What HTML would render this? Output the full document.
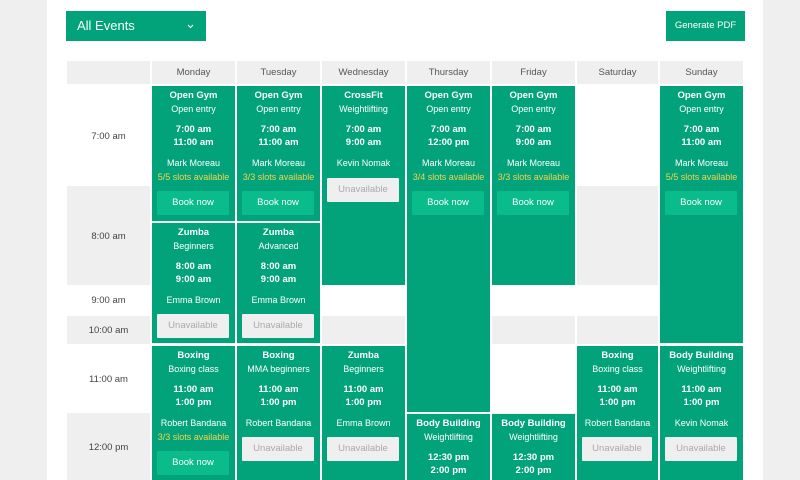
<!DOCTYPE html>
<html><head><meta charset="utf-8"><style>
*{box-sizing:border-box;margin:0;padding:0}
body{width:800px;height:480px;overflow:hidden;background:#efefef;font-family:"Liberation Sans",sans-serif;position:relative}
.panel{position:absolute;left:47px;top:0;width:716px;height:480px;background:#fff}
.a{position:absolute}
.g{background:#efefef}
.hd{position:absolute;top:61px;height:23px;background:#efefef;color:#555;font-size:9.5px;text-align:center;line-height:23px}
.t{position:absolute;left:67px;width:83px;font-size:9.5px;color:#444;text-align:center}
.ev{position:absolute;background:#02a37a;color:#fff;text-align:center;font-size:9px;line-height:12.5px;padding-top:4px}
.ev b{display:block;font-size:9.5px}
.ev .sp{height:9px}
.ev .n{margin-top:8px}
.ev .s{color:#f2d54a;margin-top:1px}
.bt{position:absolute;left:5px;right:6px;height:24px;line-height:24px;font-size:9.5px;border-radius:1px}
.bk{background:#0abb8b;color:#fff}
.un{background:#efefef;color:#aaa}
</style></head><body>
<div class="panel"></div>
<div class="a" style="left:66px;top:11px;width:140px;height:30px;background:#02a37a;color:#fff;font-size:13px;line-height:30px;padding-left:11px">All Events<svg style="position:absolute;left:186px;left:121px;top:13px" width="7" height="5" viewBox="0 0 7 5"><path d="M1 1L3.5 3.5L6 1" stroke="#fff" stroke-width="1.2" fill="none"/></svg></div>
<div class="a" style="left:666px;top:11px;width:79px;height:30px;background:#02a37a;color:#fff;font-size:9.5px;line-height:30px;text-align:center">Generate PDF</div>

<div class="hd" style="left:67px;width:83px"></div>
<div class="hd" style="left:152px;width:83px">Monday</div>
<div class="hd" style="left:237px;width:83px">Tuesday</div>
<div class="hd" style="left:322px;width:83px">Wednesday</div>
<div class="hd" style="left:407px;width:83px">Thursday</div>
<div class="hd" style="left:492px;width:83px">Friday</div>
<div class="hd" style="left:577px;width:81px">Saturday</div>
<div class="hd" style="left:660px;width:83px">Sunday</div>

<div class="a g" style="left:67px;top:186px;width:676px;height:99px"></div>
<div class="a g" style="left:67px;top:316px;width:676px;height:28px"></div>
<div class="a g" style="left:67px;top:413px;width:676px;height:67px"></div>
<div class="a" style="left:150px;top:61px;width:2px;height:419px;background:#fff"></div>
<div class="a" style="left:235px;top:61px;width:2px;height:419px;background:#fff"></div>
<div class="a" style="left:320px;top:61px;width:2px;height:419px;background:#fff"></div>
<div class="a" style="left:405px;top:61px;width:2px;height:419px;background:#fff"></div>
<div class="a" style="left:490px;top:61px;width:2px;height:419px;background:#fff"></div>
<div class="a" style="left:575px;top:61px;width:2px;height:419px;background:#fff"></div>
<div class="a" style="left:658px;top:61px;width:2px;height:419px;background:#fff"></div>

<div class="t" style="top:131px">7:00 am</div>
<div class="t" style="top:231px">8:00 am</div>
<div class="t" style="top:295px">9:00 am</div>
<div class="t" style="top:325px">10:00 am</div>
<div class="t" style="top:374px">11:00 am</div>
<div class="t" style="top:442px">12:00 pm</div>

<div class="ev" style="left:152px;top:86px;width:83px;height:135px"><b>Open Gym</b>Open entry<div class="sp"></div><b>7:00 am</b><b>11:00 am</b><div class="n">Mark Moreau</div><div class="s">5/5 slots available</div><div class="bt bk" style="top:105px">Book now</div></div>
<div class="ev" style="left:152px;top:223px;width:83px;height:120px"><b>Zumba</b>Beginners<div class="sp"></div><b>8:00 am</b><b>9:00 am</b><div class="n">Emma Brown</div><div class="bt un" style="top:91px">Unavailable</div></div>
<div class="ev" style="left:152px;top:346px;width:83px;height:134px"><b>Boxing</b>Boxing class<div class="sp"></div><b>11:00 am</b><b>1:00 pm</b><div class="n">Robert Bandana</div><div class="s">3/3 slots available</div><div class="bt bk" style="top:105px">Book now</div></div>
<div class="ev" style="left:237px;top:86px;width:83px;height:135px"><b>Open Gym</b>Open entry<div class="sp"></div><b>7:00 am</b><b>11:00 am</b><div class="n">Mark Moreau</div><div class="s">3/3 slots available</div><div class="bt bk" style="top:105px">Book now</div></div>
<div class="ev" style="left:237px;top:223px;width:83px;height:120px"><b>Zumba</b>Advanced<div class="sp"></div><b>8:00 am</b><b>9:00 am</b><div class="n">Emma Brown</div><div class="bt un" style="top:91px">Unavailable</div></div>
<div class="ev" style="left:237px;top:346px;width:83px;height:134px"><b>Boxing</b>MMA beginners<div class="sp"></div><b>11:00 am</b><b>1:00 pm</b><div class="n">Robert Bandana</div><div class="bt un" style="top:91px">Unavailable</div></div>
<div class="ev" style="left:322px;top:86px;width:83px;height:199px"><b>CrossFit</b>Weightlifting<div class="sp"></div><b>7:00 am</b><b>9:00 am</b><div class="n">Kevin Nomak</div><div class="bt un" style="top:92px">Unavailable</div></div>
<div class="ev" style="left:322px;top:346px;width:83px;height:134px"><b>Zumba</b>Beginners<div class="sp"></div><b>11:00 am</b><b>1:00 pm</b><div class="n">Emma Brown</div><div class="bt un" style="top:91px">Unavailable</div></div>
<div class="ev" style="left:407px;top:86px;width:83px;height:326px"><b>Open Gym</b>Open entry<div class="sp"></div><b>7:00 am</b><b>12:00 pm</b><div class="n">Mark Moreau</div><div class="s">3/4 slots available</div><div class="bt bk" style="top:105px">Book now</div></div>
<div class="ev" style="left:407px;top:414px;width:83px;height:66px"><b>Body Building</b>Weightlifting<div class="sp"></div><b>12:30 pm</b><b>2:00 pm</b></div>
<div class="ev" style="left:492px;top:86px;width:83px;height:199px"><b>Open Gym</b>Open entry<div class="sp"></div><b>7:00 am</b><b>9:00 am</b><div class="n">Mark Moreau</div><div class="s">3/3 slots available</div><div class="bt bk" style="top:105px">Book now</div></div>
<div class="ev" style="left:492px;top:414px;width:83px;height:66px"><b>Body Building</b>Weightlifting<div class="sp"></div><b>12:30 pm</b><b>2:00 pm</b></div>
<div class="ev" style="left:577px;top:346px;width:81px;height:134px"><b>Boxing</b>Boxing class<div class="sp"></div><b>11:00 am</b><b>1:00 pm</b><div class="n">Robert Bandana</div><div class="bt un" style="top:91px">Unavailable</div></div>
<div class="ev" style="left:660px;top:86px;width:83px;height:257px"><b>Open Gym</b>Open entry<div class="sp"></div><b>7:00 am</b><b>11:00 am</b><div class="n">Mark Moreau</div><div class="s">5/5 slots available</div><div class="bt bk" style="top:105px">Book now</div></div>
<div class="ev" style="left:660px;top:346px;width:83px;height:134px"><b>Body Building</b>Weightlifting<div class="sp"></div><b>11:00 am</b><b>1:00 pm</b><div class="n">Kevin Nomak</div><div class="bt un" style="top:91px">Unavailable</div></div>
</body></html>
